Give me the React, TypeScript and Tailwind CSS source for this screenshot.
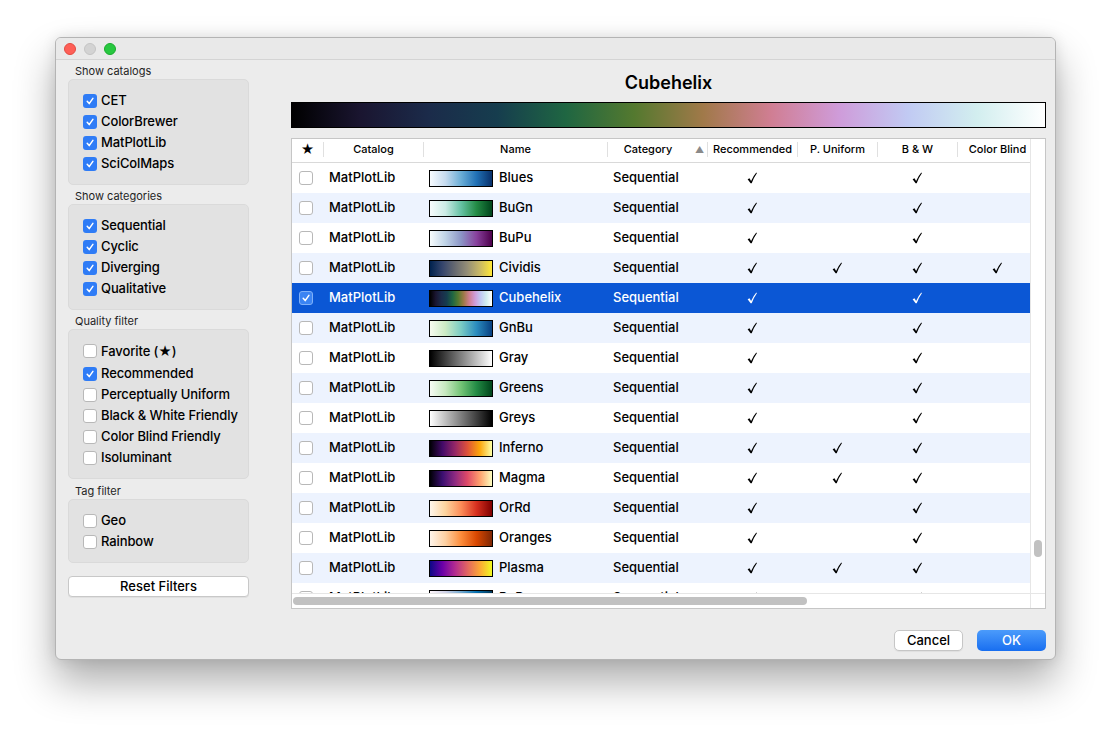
import React from "react";

type Row = {
  name: string;
  grad: string[];
  rec: boolean;
  pu: boolean;
  bw: boolean;
  cb: boolean;
};

const CUBEHELIX = [
  "#000000",
  "#1a1530",
  "#1b2b4a",
  "#163d4e",
  "#1f6642",
  "#54792f",
  "#a07949",
  "#d07e93",
  "#cf9cda",
  "#c1caf3",
  "#d2eeef",
  "#ffffff",
];

const rows: Row[] = [
  { name: "Blues", grad: ["#f7fbff", "#c6dbef", "#6baed6", "#2171b5", "#08306b"], rec: true, pu: false, bw: true, cb: false },
  { name: "BuGn", grad: ["#f7fcfd", "#ccece6", "#66c2a4", "#238b45", "#00441b"], rec: true, pu: false, bw: true, cb: false },
  { name: "BuPu", grad: ["#f7fcfd", "#bfd3e6", "#8c96c6", "#88419d", "#4d004b"], rec: true, pu: false, bw: true, cb: false },
  { name: "Cividis", grad: ["#00224e", "#35456c", "#666970", "#948e77", "#c8b866", "#fee838"], rec: true, pu: true, bw: true, cb: true },
  { name: "Cubehelix", grad: CUBEHELIX, rec: true, pu: false, bw: true, cb: false },
  { name: "GnBu", grad: ["#f7fcf0", "#ccebc5", "#7bccc4", "#2b8cbe", "#084081"], rec: true, pu: false, bw: true, cb: false },
  { name: "Gray", grad: ["#000000", "#ffffff"], rec: true, pu: false, bw: true, cb: false },
  { name: "Greens", grad: ["#f7fcf5", "#c7e9c0", "#74c476", "#238b45", "#00441b"], rec: true, pu: false, bw: true, cb: false },
  { name: "Greys", grad: ["#ffffff", "#000000"], rec: true, pu: false, bw: true, cb: false },
  { name: "Inferno", grad: ["#000004", "#420a68", "#932667", "#dd513a", "#fca50a", "#fcffa4"], rec: true, pu: true, bw: true, cb: false },
  { name: "Magma", grad: ["#000004", "#3b0f70", "#8c2981", "#de4968", "#fe9f6d", "#fcfdbf"], rec: true, pu: true, bw: true, cb: false },
  { name: "OrRd", grad: ["#fff7ec", "#fdd49e", "#fc8d59", "#d7301f", "#7f0000"], rec: true, pu: false, bw: true, cb: false },
  { name: "Oranges", grad: ["#fff5eb", "#fdd0a2", "#fd8d3c", "#d94801", "#7f2704"], rec: true, pu: false, bw: true, cb: false },
  { name: "Plasma", grad: ["#0d0887", "#6a00a8", "#b12a90", "#e16462", "#fca636", "#f0f921"], rec: true, pu: true, bw: true, cb: false },
  { name: "PuBu", grad: ["#fff7fb", "#d0d1e6", "#74a9cf", "#0570b0", "#023858"], rec: true, pu: false, bw: true, cb: false },
];

function grad(c: string[]) {
  return { background: `linear-gradient(to right, ${c.join(", ")})` };
}

function CheckBox({ checked, selected }: { checked?: boolean; selected?: boolean }) {
  if (checked || selected) {
    return (
      <span
        className={
          "w-[14px] h-[14px] shrink-0 rounded-[3px] flex items-center justify-center " +
          (selected ? "bg-[#3b84f3] border border-[#7fb0f8]" : "bg-[#2f7cf6]")
        }
      >
        {checked ? (
          <svg width="10" height="10" viewBox="0 0 10 10">
            <path d="M2.2 5.3 L4.2 7.6 L7.9 2.4" stroke="white" strokeWidth="1.5" fill="none" strokeLinecap="round" strokeLinejoin="round" />
          </svg>
        ) : null}
      </span>
    );
  }
  return <span className="w-[14px] h-[14px] shrink-0 rounded-[3px] bg-white border border-[#b8b8b8]" />;
}

function Item({ label, checked, tall }: { label: string; checked?: boolean; tall?: boolean }) {
  return (
    <div className={"flex items-center gap-[4px] " + (tall ? "h-[24px]" : "h-[21px]")}>
      <CheckBox checked={checked} />
      <span className="text-[13px] font-medium text-black leading-none tracking-[-0.1px]">{label}</span>
    </div>
  );
}

function GroupLabel({ children, mt }: { children: React.ReactNode; mt: string }) {
  return <div className={"h-[14px] leading-[13px] text-[11px] text-[#1f1f1f] pl-[7px] " + mt}>{children}</div>;
}

function Check({ on, sel }: { on: boolean; sel: boolean }) {
  return (
    <div className={"flex items-center justify-center h-full " + (sel ? "text-white" : "text-black")}>
      {on ? (
        <svg width="10" height="12" viewBox="0 0 10 12">
          <path
            d="M0.6 7.3 L2.5 6.3 L4.1 8.9 Q6.2 4.2 9.3 0.6 L9.9 1.2 Q7 5 4.7 11.3 L3.6 11.3 Z"
            fill="currentColor"
          />
        </svg>
      ) : null}
    </div>
  );
}

function HeaderCell({ w, children, first }: { w: string; children: React.ReactNode; first?: boolean }) {
  return (
    <div className={w + " shrink-0 flex items-center justify-center my-[3px] " + (first ? "" : "border-l border-[#e0e0e0]")}>
      {children}
    </div>
  );
}

export default function App() {
  return (
    <div className="w-[1112px] h-[734px] bg-white font-['Inter','Noto_Sans',sans-serif] pt-[37px] pl-[55px]">
      <div className="w-[1001px] h-[623px] bg-[#ececec] rounded-[6px] border border-[#b4b4b4] shadow-[0_22px_40px_rgba(0,0,0,0.32),0_0_14px_rgba(0,0,0,0.10)] flex flex-col overflow-hidden">
        {/* title bar */}
        <div className="h-[22px] shrink-0 flex items-center gap-[8px] pl-[8px] bg-[#e9e9e9] border-b border-[#d4d4d4]">
          <span className="w-[12px] h-[12px] rounded-full bg-[#fe5f57] border border-[#e24b41]" />
          <span className="w-[12px] h-[12px] rounded-full bg-[#d3d3d3] border border-[#c4c4c4]" />
          <span className="w-[12px] h-[12px] rounded-full bg-[#28c840] border border-[#1aab2d]" />
        </div>

        <div className="flex flex-1">
          {/* sidebar */}
          <div className="w-[181px] ml-[12px] pt-[5px] flex flex-col">
            <GroupLabel mt="mt-0">Show catalogs</GroupLabel>
            <div className="bg-[#e2e2e2] border border-[#dadada] rounded-[5px] pl-[14px] pt-[10px] pb-[10px]">
              <Item label="CET" checked />
              <Item label="ColorBrewer" checked />
              <Item label="MatPlotLib" checked />
              <Item label="SciColMaps" checked />
            </div>
            <GroupLabel mt="mt-[5px]">Show categories</GroupLabel>
            <div className="bg-[#e2e2e2] border border-[#dadada] rounded-[5px] pl-[14px] pt-[10px] pb-[10px]">
              <Item label="Sequential" checked />
              <Item label="Cyclic" checked />
              <Item label="Diverging" checked />
              <Item label="Qualitative" checked />
            </div>
            <GroupLabel mt="mt-[5px]">Quality filter</GroupLabel>
            <div className="bg-[#e2e2e2] border border-[#dadada] rounded-[5px] pl-[14px] pt-[9px] pb-[10px]">
              <Item label="Favorite (★)" tall />
              <Item label="Recommended" checked />
              <Item label="Perceptually Uniform" />
              <Item label="Black & White Friendly" />
              <Item label="Color Blind Friendly" />
              <Item label="Isoluminant" />
            </div>
            <GroupLabel mt="mt-[6px]">Tag filter</GroupLabel>
            <div className="bg-[#e2e2e2] border border-[#dadada] rounded-[5px] pl-[14px] pt-[10px] pb-[10px]">
              <Item label="Geo" />
              <Item label="Rainbow" />
            </div>
            <button className="mt-[13px] h-[21px] w-full bg-white border border-[#c8c8c8] rounded-[4px] text-[13px] font-medium text-black leading-none shadow-[0_1px_0_rgba(0,0,0,0.05)]">
              Reset Filters
            </button>
          </div>

          {/* main panel */}
          <div className="w-[755px] ml-[42px] flex flex-col pt-[11px]">
            <div className="h-[24px] leading-[24px] text-center text-[18px] font-semibold text-black">Cubehelix</div>
            <div className="mt-[7px] h-[26px] border border-black" style={grad(CUBEHELIX)} />

            {/* table */}
            <div className="mt-[10px] h-[471px] bg-white border border-[#c6c6c6] flex">
              <div className="w-[738px] flex flex-col overflow-hidden">
                {/* header */}
                <div className="h-[24px] shrink-0 border-b border-[#d9d9d9] flex text-[11px] font-medium text-black leading-none pb-[2px]">
                  <HeaderCell w="w-[31px]" first>
                    <span className="text-[13px]">★</span>
                  </HeaderCell>
                  <HeaderCell w="w-[100px]">Catalog</HeaderCell>
                  <HeaderCell w="w-[184px]">Name</HeaderCell>
                  <div className="w-[100px] shrink-0 relative flex items-center border-l border-[#e0e0e0] my-[3px]">
                    <span className="w-[80px] text-center">Category</span>
                    <span className="ml-[7px] text-[9px] text-[#8a8a8a]">▲</span>
                  </div>
                  <HeaderCell w="w-[90px]">Recommended</HeaderCell>
                  <HeaderCell w="w-[80px]">P. Uniform</HeaderCell>
                  <HeaderCell w="w-[80px]">B &amp; W</HeaderCell>
                  <HeaderCell w="w-[80px]">Color Blind</HeaderCell>
                </div>
                {/* body */}
                <div className="flex-1 overflow-hidden">
                  {rows.map((r, i) => {
                    const sel = r.name === "Cubehelix";
                    const bg = sel ? "bg-[#0b57d5]" : i % 2 === 1 ? "bg-[#edf3fe]" : "bg-white";
                    const tc = sel ? "text-white" : "text-black";
                    return (
                      <div key={r.name} className={"h-[30px] flex text-[13px] font-medium " + bg + " " + tc}>
                        <div className="w-[31px] shrink-0 flex items-center pl-[7px]">
                          <CheckBox checked={sel} selected={sel} />
                        </div>
                        <div className="w-[100px] shrink-0 flex items-center pl-[6px]">MatPlotLib</div>
                        <div className="w-[184px] shrink-0 flex items-center pl-[6px] gap-[6px]">
                          <span className="w-[64px] h-[17px] shrink-0 border border-black" style={grad(r.grad)} />
                          <span>{r.name}</span>
                        </div>
                        <div className="w-[100px] shrink-0 flex items-center pl-[6px]">Sequential</div>
                        <div className="w-[90px] shrink-0">
                          <Check on={r.rec} sel={sel} />
                        </div>
                        <div className="w-[80px] shrink-0">
                          <Check on={r.pu} sel={sel} />
                        </div>
                        <div className="w-[80px] shrink-0">
                          <Check on={r.bw} sel={sel} />
                        </div>
                        <div className="w-[80px] shrink-0">
                          <Check on={r.cb} sel={sel} />
                        </div>
                      </div>
                    );
                  })}
                </div>
                {/* horizontal scrollbar */}
                <div className="h-[15px] shrink-0 border-t border-[#e6e6e6] bg-white flex items-center pl-[1px]">
                  <div className="w-[514px] h-[8px] rounded-full bg-[#c1c1c1]" />
                </div>
              </div>
              {/* vertical scrollbar */}
              <div className="w-[15px] border-l border-[#e6e6e6] flex flex-col">
                <div className="flex-1 flex justify-center">
                  <div className="mt-[401px] w-[8px] h-[17px] rounded-full bg-[#c1c1c1]" />
                </div>
                <div className="h-[15px] border-t border-[#e6e6e6]" />
              </div>
            </div>

            {/* buttons */}
            <div className="mt-[21px] flex justify-end gap-[14px]">
              <button className="w-[69px] h-[21px] bg-white border border-[#c6c6c6] rounded-[5px] text-[13px] font-medium text-black leading-none shadow-[0_1px_1px_rgba(0,0,0,0.06)]">
                Cancel
              </button>
              <button className="w-[69px] h-[21px] bg-gradient-to-b from-[#4b9bfb] to-[#176ef0] rounded-[5px] text-[13px] font-medium text-white leading-none">
                OK
              </button>
            </div>
          </div>
        </div>
      </div>
    </div>
  );
}
